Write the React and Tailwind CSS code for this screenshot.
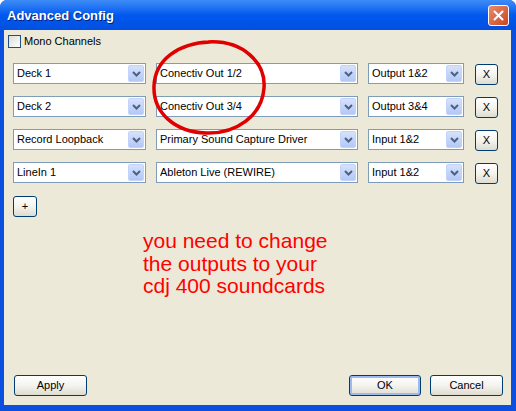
import React from 'react';

const rows = [
  { src: 'Deck 1', dev: 'Conectiv Out 1/2', ch: 'Output 1&2' },
  { src: 'Deck 2', dev: 'Conectiv Out 3/4', ch: 'Output 3&4' },
  { src: 'Record Loopback', dev: 'Primary Sound Capture Driver', ch: 'Input 1&2' },
  { src: 'LineIn 1', dev: 'Ableton Live (REWIRE)', ch: 'Input 1&2' },
];

function Select({ value, width }) {
  return (
    <div className={`${width} h-[21px] flex items-center bg-white border border-[#7f9db9] pl-[3px] pr-px`}>
      <span className="flex-1 truncate">{value}</span>
      <div className="w-[16px] h-[17px] flex items-center justify-center rounded-[2px] bg-gradient-to-b from-[#d6e2fc] to-[#b3c8f5] border border-[#c3d3fd]">
        <svg width="9" height="6" viewBox="0 0 9 6">
          <path d="M1 1 L4.5 4.5 L8 1" fill="none" stroke="#4d6185" strokeWidth="2" />
        </svg>
      </div>
    </div>
  );
}

function XpButton({ children, className = '', focus = false }) {
  return (
    <button
      className={`h-[21px] flex items-center justify-center rounded-[3px] border border-[#003c74] bg-gradient-to-b from-white via-[#f4f3ee] to-[#dedcd0] text-black ${
        focus ? 'shadow-[inset_0_0_0_2px_#9dbaf0]' : ''
      } ${className}`}
    >
      {children}
    </button>
  );
}

export default function App() {
  return (
    <div className="w-[516px] h-[411px] flex flex-col bg-[#0b4fe0] rounded-t-[7px] overflow-hidden text-[11px] leading-[13px] text-black font-['Liberation_Sans',Arial,sans-serif]">
      {/* title bar */}
      <div className="h-[30px] flex items-center justify-between pl-[7px] pr-[7px] bg-gradient-to-b from-[#3d8cf7] via-[#0058ee] to-[#0250e0]">
        <span className="text-white font-bold text-[13px] [text-shadow:1px_1px_0_#0a1f77]">
          Advanced Config
        </span>
        <div className="w-[21px] h-[21px] flex items-center justify-center rounded-[3px] border border-white bg-gradient-to-br from-[#e88a6c] to-[#cc4419]">
          <svg width="11" height="11" viewBox="0 0 11 11">
            <path d="M1.5 1.5 L9.5 9.5 M9.5 1.5 L1.5 9.5" stroke="white" strokeWidth="2" strokeLinecap="round" />
          </svg>
        </div>
      </div>

      {/* body */}
      <div className="relative flex-1 flex flex-col ml-[4px] mr-[5px] mb-[6px] bg-[#ece9d8]">
        <div className="h-[13px] flex items-center gap-[3px] pl-[4px] mt-[5px]">
          <div className="w-[13px] h-[13px] border border-[#1c5180] bg-gradient-to-br from-[#dcdcd7] to-white" />
          <span>Mono Channels</span>
        </div>

        <div className="flex flex-col gap-[12px] pl-[9px] mt-[15px]">
          {rows.map((r) => (
            <div key={r.src} className="h-[21px] flex items-start">
              <Select value={r.src} width="w-[133px]" />
              <div className="w-[10px]" />
              <Select value={r.dev} width="w-[202px]" />
              <div className="w-[10px]" />
              <Select value={r.ch} width="w-[96px]" />
              <div className="w-[11px]" />
              <XpButton className="w-[23px] mt-px">X</XpButton>
            </div>
          ))}
        </div>

        <div className="pl-[9px] mt-[13px]">
          <XpButton className="w-[24px]">+</XpButton>
        </div>

        <div className="pl-[139px] mt-[13px] text-[#ff0000] text-[21px] leading-[22.5px] font-['Liberation_Sans',Arial,sans-serif]">
          <p>you need to change</p>
          <p>the outputs to your</p>
          <p>cdj 400 soundcards</p>
        </div>

        <div className="flex-1" />

        <div className="flex items-center pl-[10px] pr-[8px] pb-[9px]">
          <XpButton className="w-[73px]">Apply</XpButton>
          <div className="flex-1" />
          <XpButton className="w-[72px]" focus>OK</XpButton>
          <div className="w-[9px]" />
          <XpButton className="w-[73px]">Cancel</XpButton>
        </div>

        {/* hand-drawn annotation circle */}
        <svg className="absolute left-[144px] top-[8px] pointer-events-none" width="124" height="100" viewBox="0 0 124 100">
          <path
            d="M60 4 C95 2 118 25 116 50 C114 78 88 96 58 95 C26 94 5 74 6 48 C7 22 30 5 62 4"
            fill="none"
            stroke="#e00000"
            strokeWidth="3.5"
          />
        </svg>
      </div>
    </div>
  );
}
